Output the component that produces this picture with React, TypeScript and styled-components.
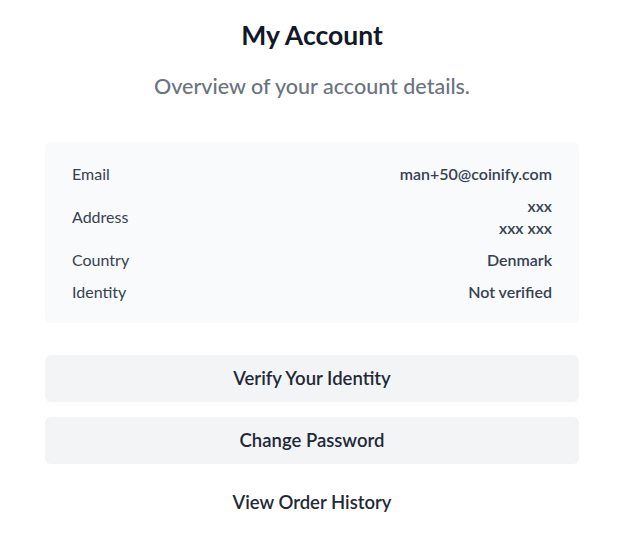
import React from 'react';
import styled, { createGlobalStyle } from 'styled-components';

/*----------- Styles ----------- */
const GlobalStyle = createGlobalStyle`
  html, body {
    margin: 0;
    padding: 0;
    background: #ffffff;
  }
  body {
    font-family: Lato, "Open Sans", Arial, sans-serif;
    -webkit-font-smoothing: antialiased;
  }
`;

const Page = styled.div`
  width: 534px;
  padding: 19px 0 0 45px;
  display: flex;
  flex-direction: column;
`;

const Title = styled.h1`
  margin: 0;
  text-align: center;
  font-size: 26.5px;
  line-height: 32px;
  font-weight: 700;
  color: #111827;
`;

const Subtitle = styled.p`
  margin: 21px 0 0;
  text-align: center;
  font-size: 21.5px;
  line-height: 28px;
  font-weight: 500;
  color: #6b7280;
`;

const Card = styled.div`
  margin-top: 42px;
  background: #f9fafb;
  border-radius: 6px;
  padding: 21px 27px 20px;
  display: flex;
  flex-direction: column;
  gap: 10px;
`;

const Row = styled.div`
  display: flex;
  justify-content: space-between;
  align-items: center;
  font-size: 16px;
  line-height: 22px;
  color: #374151;
`;

const Label = styled.span`
  font-weight: 400;
`;

const Value = styled.span`
  font-weight: 600;
  text-align: right;
  display: flex;
  flex-direction: column;
`;

const Actions = styled.div`
  margin-top: 32px;
  display: flex;
  flex-direction: column;
  gap: 15px;
`;

const Button = styled.button<{ $plain?: boolean }>`
  height: 47px;
  padding: 0 0 2px;
  border: none;
  border-radius: 6px;
  background: ${(p) => (p.$plain ? 'transparent' : '#f3f4f6')};
  font-family: inherit;
  font-size: 18.5px;
  font-weight: 600;
  color: #1f2937;
  cursor: pointer;
`;

const details: { label: string; value: string[] }[] = [
  { label: 'Email', value: ['man+50@coinify.com'] },
  { label: 'Address', value: ['xxx', 'xxx xxx'] },
  { label: 'Country', value: ['Denmark'] },
  { label: 'Identity', value: ['Not verified'] },
];

export default function App() {
  return (
    <>
      <GlobalStyle />
      <Page>
        <Title>My Account</Title>
        <Subtitle>Overview of your account details.</Subtitle>
        <Card>
          {details.map((d) => (
            <Row key={d.label}>
              <Label>{d.label}</Label>
              <Value>
                {d.value.map((v) => (
                  <span key={v}>{v}</span>
                ))}
              </Value>
            </Row>
          ))}
        </Card>
        <Actions>
          <Button>Verify Your Identity</Button>
          <Button>Change Password</Button>
          <Button $plain>View Order History</Button>
        </Actions>
      </Page>
    </>
  );
}
